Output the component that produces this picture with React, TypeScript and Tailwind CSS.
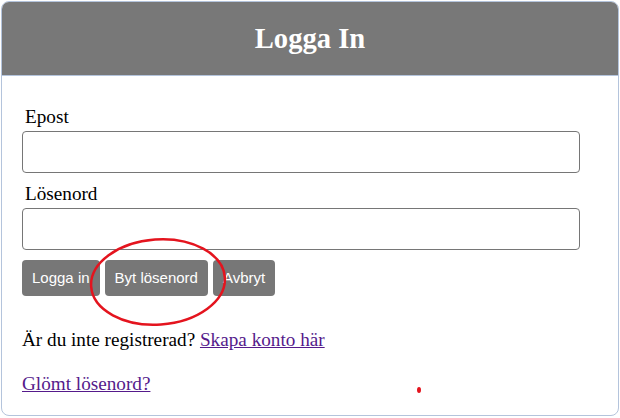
import React from "react";

export default function App() {
  return (
    <div className="relative w-[620px] h-[418px] bg-white overflow-hidden">
      <div className="ml-[1px] mt-[1px] w-[618px] h-[415px] border border-[#b4c4dc] rounded-[8px] overflow-hidden font-['Liberation_Serif',serif] text-black">
        <div className="h-[74px] bg-[#787878] border-b border-[#b4c4dc] flex items-center justify-center">
          <h1 className="text-[28.6px] font-bold text-white leading-none mt-[1px]">Logga In</h1>
        </div>
        <div className="pl-[20px] pt-[30px]">
          <div className="pl-[3px] text-[19.2px] leading-[22px]">Epost</div>
          <input className="mt-[3px] block w-[558px] h-[42px] border border-[#767676] rounded-[4px] bg-white" />
          <div className="mt-[10px] pl-[3px] text-[19.2px] leading-[22px]">Lösenord</div>
          <input type="password" className="mt-[3px] block w-[558px] h-[42px] border border-[#767676] rounded-[4px] bg-white" />
          <div className="mt-[10px] flex gap-[5px] font-['Liberation_Sans',Arial,sans-serif] text-[15px] text-white">
            <button className="h-[36px] px-[10px] bg-[#777777] rounded-[4px]">Logga in</button>
            <button className="h-[36px] px-[10px] bg-[#777777] rounded-[4px]">Byt lösenord</button>
            <button className="h-[36px] px-[10px] bg-[#777777] rounded-[4px]">Avbryt</button>
          </div>
          <div className="mt-[33px] text-[19.2px] leading-[22px]">
            Är du inte registrerad?{" "}
            <a href="#" className="text-[#551a8b] underline">Skapa konto här</a>
          </div>
          <div className="mt-[22px] text-[19.2px] leading-[22px]">
            <a href="#" className="text-[#551a8b] underline">Glömt lösenord?</a>
          </div>
        </div>
      </div>
      <svg className="absolute left-0 top-0 pointer-events-none" width="620" height="418">
        <ellipse cx="158" cy="282" rx="67" ry="42.5" fill="none" stroke="#e4141e" strokeWidth="2.5" transform="rotate(-4 158 282)" />
        <ellipse cx="419" cy="390" rx="2" ry="3" fill="#e4141e" />
      </svg>
    </div>
  );
}
